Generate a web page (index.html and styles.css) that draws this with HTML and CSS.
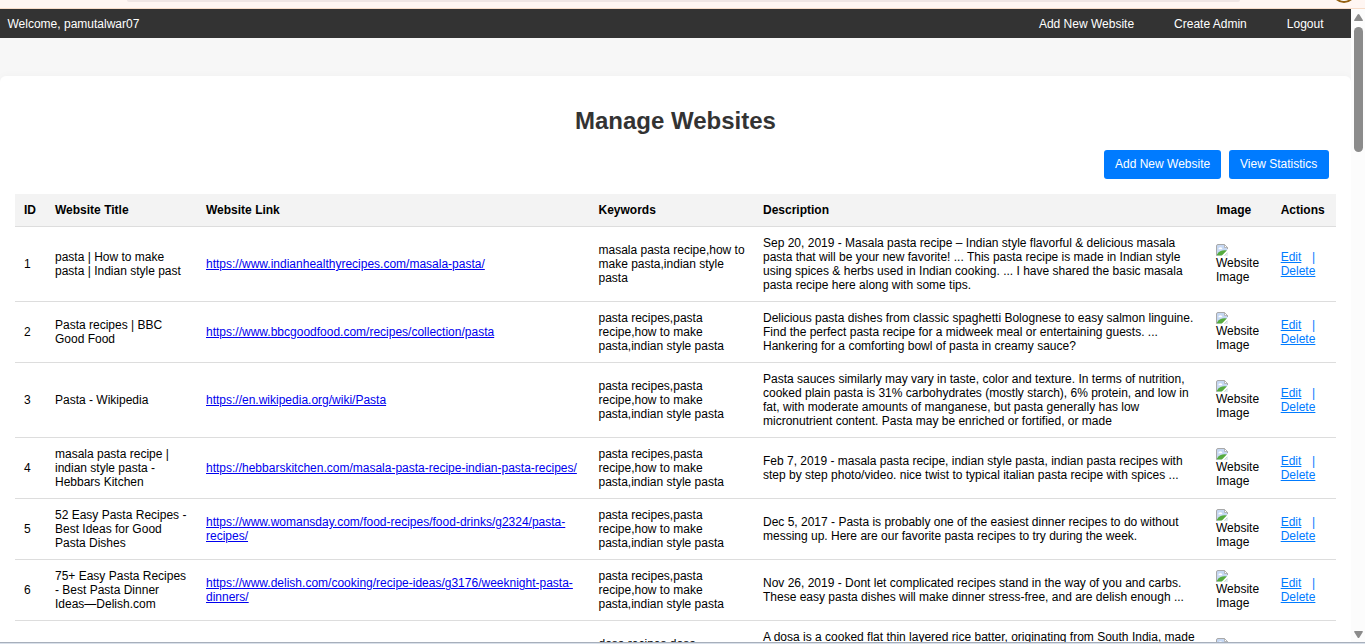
FILE: index.html
```html
<!DOCTYPE html>
<html lang="en">
<head>
<meta charset="utf-8">
<title>Manage Websites</title>
<link rel="stylesheet" href="styles.css">
</head>
<body>
<svg class="defs" width="0" height="0" aria-hidden="true">
  <symbol id="broken" viewBox="0 0 12 12">
    <path d="M2 .5H8.5L11.5 3.5V11.5H.5V2Q.5.5 2 .5Z" fill="#c6d8f3"/>
    <path d="M2.3 5.2Q2.5 3.3 4.5 3.3Q6.3 3.3 6.5 5.2Z" fill="#fff"/>
    <path d="M1 11.5V10.5Q4 5.5 11 6.5V11.5Z" fill="#55ab3e"/>
    <path d="M12 5.3L5.5 12H8L12 8Z" fill="#fff"/>
    <path d="M12 8L8 12H12Z" fill="#e4eaf3"/>
    <path d="M1.5 11.5H.5V2Q.5.5 2 .5H8.5L11.5 3.5V5" fill="none" stroke="#a9a9a9"/>
    <path d="M8.5.5V3.5H11.5Z" fill="#fff" stroke="#a9a9a9" stroke-width=".8"/>
  </symbol>
</svg>
<div class="window">
  <div class="chrome"><div class="address"></div><div class="avatar"></div></div>
  <div class="view">
    <div class="page">
      <nav class="nav">
        <span>Welcome, pamutalwar07</span>
        <div class="nav-links"><a>Add New Website</a><a>Create Admin</a><a>Logout</a></div>
      </nav>
      <main class="card">
        <h1>Manage Websites</h1>
        <div class="buttons"><a class="btn">Add New Website</a><a class="btn">View Statistics</a></div>
        <table>
          <colgroup><col class="c-id"><col class="c-title"><col class="c-link"><col class="c-key"><col class="c-desc"><col class="c-img"><col class="c-act"></colgroup>
          <thead><tr><th>ID</th><th>Website Title</th><th>Website Link</th><th>Keywords</th><th>Description</th><th>Image</th><th>Actions</th></tr></thead>
          <tbody>
            <tr><td>1</td><td>pasta | How to make<br>pasta | Indian style past</td><td><a class="url">https://www.indianhealthyrecipes.com/masala-pasta/</a></td><td>masala pasta recipe,how to<br>make pasta,indian style<br>pasta</td><td>Sep 20, 2019 - Masala pasta recipe – Indian style flavorful &amp; delicious masala<br>pasta that will be your new favorite! ... This pasta recipe is made in Indian style<br>using spices &amp; herbs used in Indian cooking. ... I have shared the basic masala<br>pasta recipe here along with some tips.</td><td><svg class="pic"><use href="#broken"/></svg>Website<br>Image</td><td class="act"><a>Edit</a><i>|</i><br><a>Delete</a></td></tr>
            <tr><td>2</td><td>Pasta recipes | BBC<br>Good Food</td><td><a class="url">https://www.bbcgoodfood.com/recipes/collection/pasta</a></td><td>pasta recipes,pasta<br>recipe,how to make<br>pasta,indian style pasta</td><td>Delicious pasta dishes from classic spaghetti Bolognese to easy salmon linguine.<br>Find the perfect pasta recipe for a midweek meal or entertaining guests. ...<br>Hankering for a comforting bowl of pasta in creamy sauce?</td><td><svg class="pic"><use href="#broken"/></svg>Website<br>Image</td><td class="act"><a>Edit</a><i>|</i><br><a>Delete</a></td></tr>
            <tr><td>3</td><td>Pasta - Wikipedia</td><td><a class="url">https://en.wikipedia.org/wiki/Pasta</a></td><td>pasta recipes,pasta<br>recipe,how to make<br>pasta,indian style pasta</td><td>Pasta sauces similarly may vary in taste, color and texture. In terms of nutrition,<br>cooked plain pasta is 31% carbohydrates (mostly starch), 6% protein, and low in<br>fat, with moderate amounts of manganese, but pasta generally has low<br>micronutrient content. Pasta may be enriched or fortified, or made</td><td><svg class="pic"><use href="#broken"/></svg>Website<br>Image</td><td class="act"><a>Edit</a><i>|</i><br><a>Delete</a></td></tr>
            <tr><td>4</td><td>masala pasta recipe |<br>indian style pasta -<br>Hebbars Kitchen</td><td><a class="url">https://hebbarskitchen.com/masala-pasta-recipe-indian-pasta-recipes/</a></td><td>pasta recipes,pasta<br>recipe,how to make<br>pasta,indian style pasta</td><td>Feb 7, 2019 - masala pasta recipe, indian style pasta, indian pasta recipes with<br>step by step photo/video. nice twist to typical italian pasta recipe with spices ...</td><td><svg class="pic"><use href="#broken"/></svg>Website<br>Image</td><td class="act"><a>Edit</a><i>|</i><br><a>Delete</a></td></tr>
            <tr><td>5</td><td>52 Easy Pasta Recipes -<br>Best Ideas for Good<br>Pasta Dishes</td><td><a class="url">https://www.womansday.com/food-recipes/food-drinks/g2324/pasta-<br>recipes/</a></td><td>pasta recipes,pasta<br>recipe,how to make<br>pasta,indian style pasta</td><td>Dec 5, 2017 - Pasta is probably one of the easiest dinner recipes to do without<br>messing up. Here are our favorite pasta recipes to try during the week.</td><td><svg class="pic"><use href="#broken"/></svg>Website<br>Image</td><td class="act"><a>Edit</a><i>|</i><br><a>Delete</a></td></tr>
            <tr><td>6</td><td>75+ Easy Pasta Recipes<br>- Best Pasta Dinner<br>Ideas—Delish.com</td><td><a class="url">https://www.delish.com/cooking/recipe-ideas/g3176/weeknight-pasta-<br>dinners/</a></td><td>pasta recipes,pasta<br>recipe,how to make<br>pasta,indian style pasta</td><td>Nov 26, 2019 - Dont let complicated recipes stand in the way of you and carbs.<br>These easy pasta dishes will make dinner stress-free, and are delish enough ...</td><td><svg class="pic"><use href="#broken"/></svg>Website<br>Image</td><td class="act"><a>Edit</a><i>|</i><br><a>Delete</a></td></tr>
            <tr class="last"><td></td><td></td><td></td><td>dosa recipes,dosa</td><td>A dosa is a cooked flat thin layered rice batter, originating from South India, made</td><td><svg class="pic"><use href="#broken"/></svg></td><td></td></tr>
          </tbody>
        </table>
      </main>
    </div>
    <div class="scrollbar">
      <svg width="9" height="7" viewBox="0 0 9 7"><path d="M4.5 0Q5 0 5.4.6L8.8 6Q9.2 7 8 7H1Q-.2 7 .2 6L3.6.6Q4 0 4.5 0Z" fill="#8b8b8b"/></svg>
      <div class="thumb"></div>
      <svg class="down" width="9" height="7" viewBox="0 0 9 7"><path d="M4.5 7Q5 7 5.4 6.4L8.8 1Q9.2 0 8 0H1Q-.2 0 .2 1L3.6 6.4Q4 7 4.5 7Z" fill="#8b8b8b"/></svg>
    </div>
  </div>
  <div class="edge"></div>
</div>
</body>
</html>
```

FILE: styles.css
```css
* { box-sizing: border-box; }
body { margin: 0; overflow: hidden; font: 12px/14px "Liberation Sans", Arial, sans-serif; color: #000; }
.defs { position: absolute; }
.window { height: 644px; display: flex; flex-direction: column; overflow: hidden; }
.chrome { flex: none; height: 9px; background: #fff6f2; border-bottom: 1px solid #f7dcc8; display: flex; justify-content: space-between; padding: 0 9px 0 127px; overflow: hidden; }
.address { width: 1113px; height: 2px; background: #f0e6e4; border-radius: 0 0 8px 8px; }
.avatar { width: 24px; height: 24px; margin-top: -21px; border: 2px solid #946010; border-radius: 50%; background: #fff; }
.view { flex: none; height: 633px; display: flex; overflow: hidden; }
.page { width: 1351px; height: 633px; background: #f7f7f7; overflow: hidden; }
.nav { height: 29px; background: #333; color: #fff; display: flex; justify-content: space-between; align-items: center; padding: 0 27.5px 0 7.5px; }
.nav-links { display: flex; gap: 40px; }
.card { margin-top: 38px; padding: 30px 15px 0; background: #fff; border-radius: 6px 6px 0 0; box-shadow: 0 0 8px rgba(0, 0, 0, .03); }
h1 { margin: 0; font-size: 24px; line-height: 30px; color: #333; text-align: center; }
.buttons { display: flex; justify-content: flex-end; gap: 8px; padding: 14px 7px 15px 0; }
.btn { height: 29px; padding: 7px 11px 8px; background: #007bff; color: #fff; border-radius: 3px; white-space: nowrap; }
.btn:first-child { width: 117px; }
.btn:last-child { width: 100px; }
table { width: 1321px; table-layout: fixed; border-collapse: separate; border-spacing: 0; }
.c-id { width: 31px; }
.c-title { width: 151px; }
.c-link { width: 392px; }
.c-key { width: 165px; }
.c-desc { width: 453px; }
.c-img { width: 65px; }
.c-act { width: 64px; }
th, td { padding: 9px 0 9px 9px; text-align: left; vertical-align: middle; white-space: nowrap; border-bottom: 1px solid #ddd; }
th { background: #f3f3f3; }
th:nth-child(4), td:nth-child(4), th:nth-child(6) { padding-left: 9.5px; }
th:nth-child(7), td:nth-child(7) { padding-left: 8.7px; }
.url { color: #0000ee; text-decoration: underline; }
.pic { display: block; width: 12px; height: 12px; }
.act { color: #007bff; }
.act a { text-decoration: underline; }
.act i { font-style: normal; margin-left: 10.5px; }
.last td { height: 75px; vertical-align: top; }
.last td:nth-child(4) { padding-top: 16px; }
.last td:nth-child(6) { padding-top: 17px; }
.scrollbar { width: 14px; background: #fcfcfc; display: flex; flex-direction: column; align-items: center; padding: 5px 0 4px 1px; }
.scrollbar svg { flex: none; display: block; }
.thumb { width: 9px; height: 125px; margin-top: 6px; background: #8b8b8b; border-radius: 5px; }
.down { margin-top: auto; }
.edge { flex: none; height: 2px; background: #d9e0ea; border-top: 1px solid #a7afbb; }
```
